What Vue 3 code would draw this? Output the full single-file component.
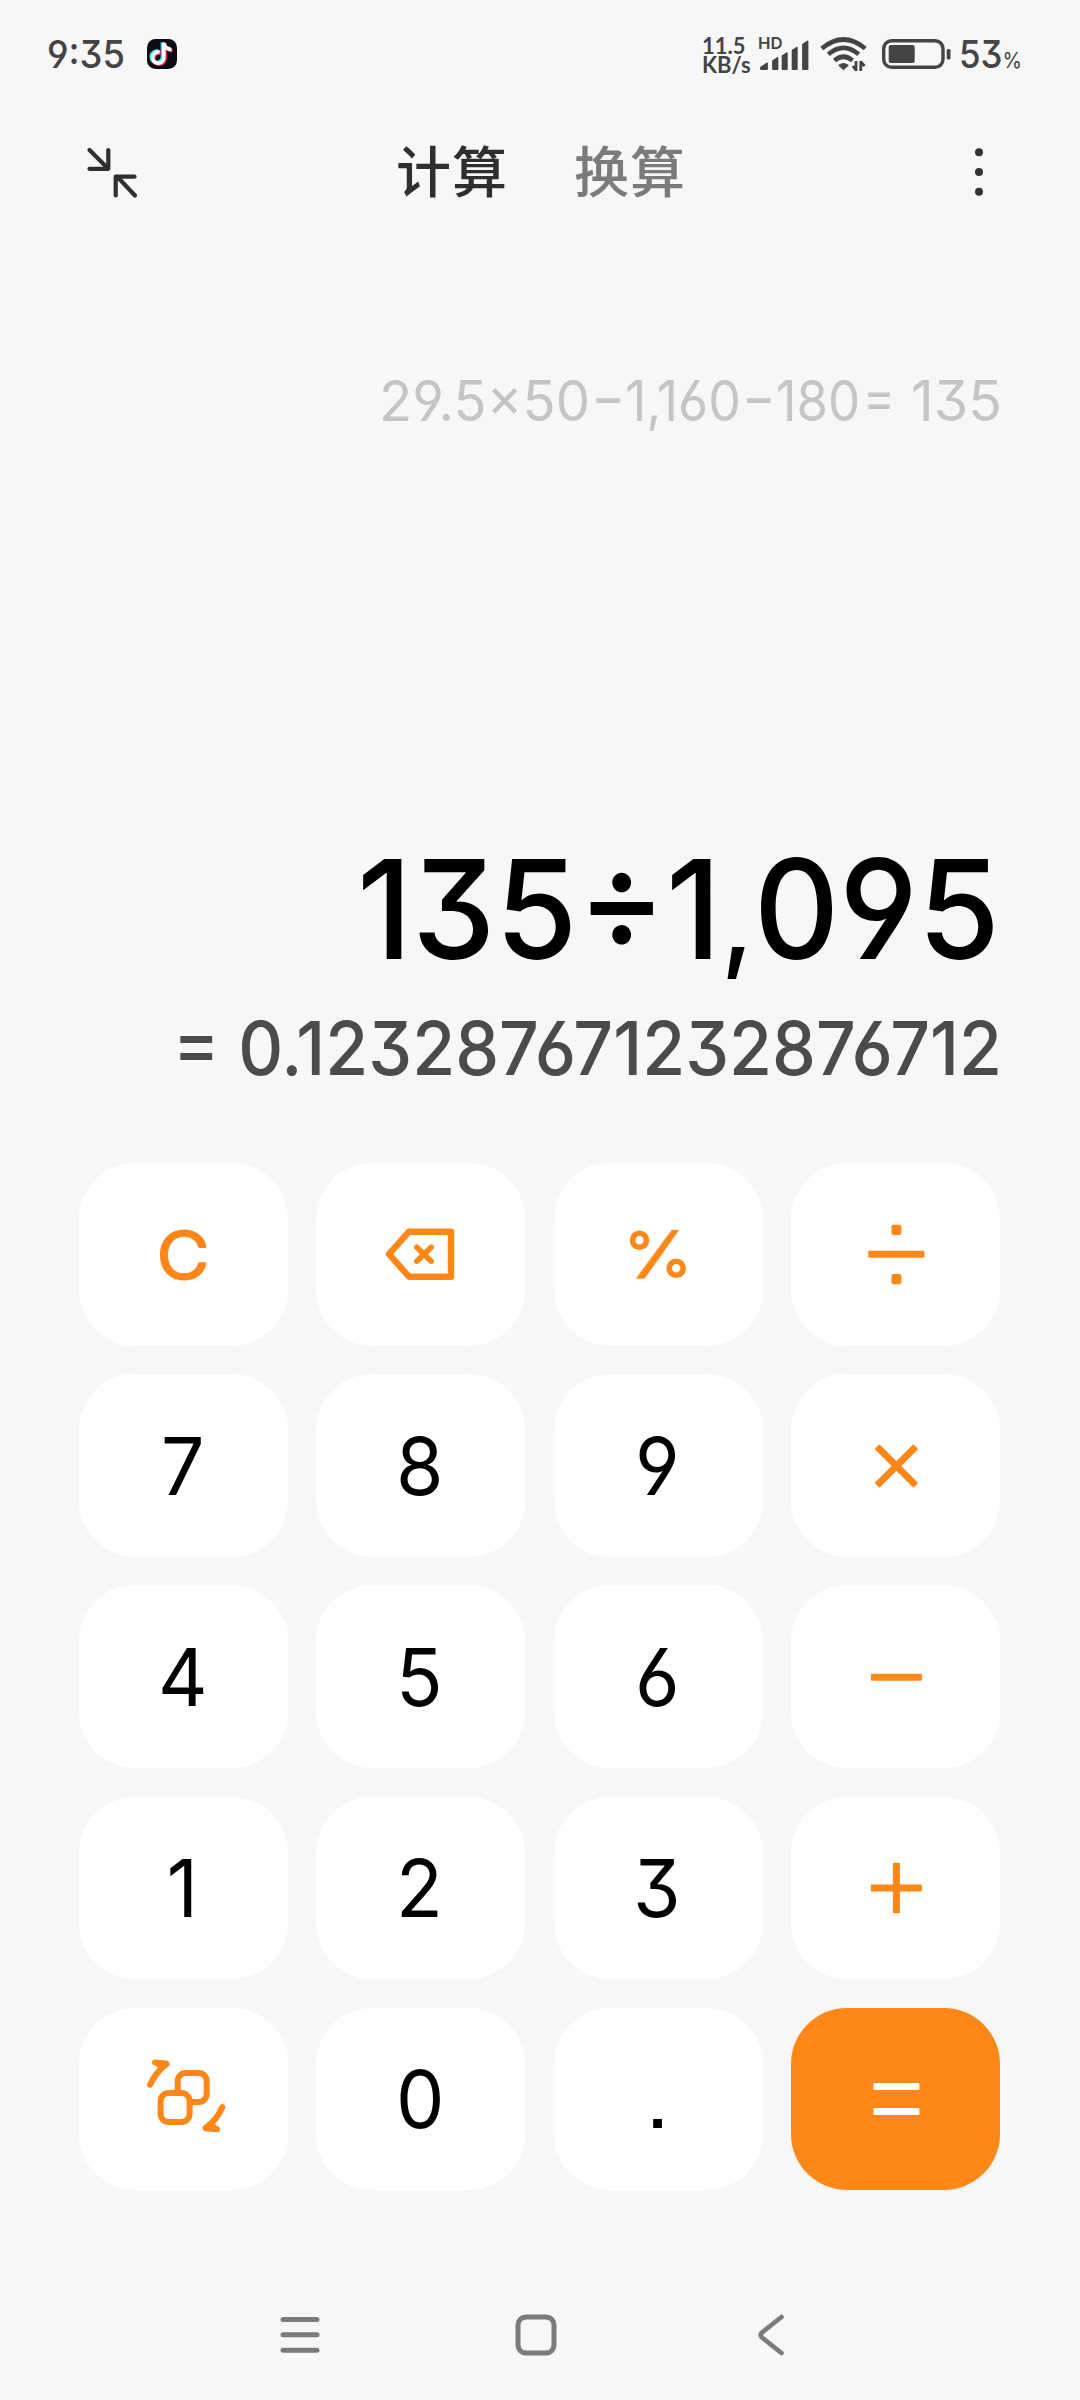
<script setup>
const keys = [
  { id: 'clear', icon: true }, { id: 'back', icon: true }, { id: 'percent', icon: true }, { id: 'divide', icon: true },
  { id: '7' }, { id: '8' }, { id: '9' }, { id: 'times', icon: true },
  { id: '4' }, { id: '5' }, { id: '6' }, { id: 'minus', icon: true },
  { id: '1' }, { id: '2' }, { id: '3' }, { id: 'plus', icon: true },
  { id: 'convert', icon: true }, { id: '0' }, { id: '.' }, { id: 'equals', icon: true },
]
</script>

<template>
  <div class="screen">
    <header class="status">
      <svg class="clock" width="78" height="40" viewBox="0 0 78 40">
        <text x="-1" y="33.800" textLength="78" lengthAdjust="spacingAndGlyphs">9:35</text>
      </svg>
      <svg class="app" width="30" height="30" viewBox="0 0 30 30">
        <rect width="30" height="30" rx="8.500" fill="#0c0a14" />
        <g fill="none" stroke-width="4">
          <path d="M12.600 13.200a5.600 5.600 0 1 0 4.200 5.400V4c.4 3.600 3.400 6.400 7.600 6.600" stroke="#35e0dc" transform="translate(-1.200 -.8)" />
          <path d="M12.600 13.200a5.600 5.600 0 1 0 4.200 5.400V4c.4 3.600 3.400 6.400 7.600 6.600" stroke="#f5365c" transform="translate(1 .8)" />
          <path d="M12.600 13.200a5.600 5.600 0 1 0 4.200 5.400V4c.4 3.600 3.400 6.400 7.600 6.600" stroke="#fff" stroke-width="3.600" />
        </g>
      </svg>
      <div class="grow"></div>
      <div class="speed">11.5<br>KB/s</div>
      <svg class="signal" width="52" height="40" viewBox="0 0 52 40">
        <text x="0" y="18" textLength="24.500" lengthAdjust="spacingAndGlyphs">HD</text>
        <path d="M3 36.500 9 32.500V38H3ZM15 30 19.500 27V38H15ZM24.600 25 28.800 22.300V38H24.600ZM34.600 19.500 38.800 16.800V38H34.600ZM45 13.500 49.500 10.500V38H45Z" fill="#444" stroke="#444" stroke-width="1.800" stroke-linejoin="round" />
      </svg>
      <svg class="wifi" width="48" height="36" viewBox="0 0 48 36">
        <g fill="none" stroke="#444" stroke-width="4.600">
          <path d="M1.800 12.500Q23.500 -5.500 45.200 12.500" />
          <path d="M8.300 18.300Q23.500 5.500 38.700 18.300" />
          <path d="M14.500 24.500Q23.500 17 32.500 24.500" />
        </g>
        <path d="M18.700 29.300Q23.500 25.800 28.300 29.300L23.500 33.800Z" fill="#444" stroke="#444" stroke-linejoin="round" />
        <path d="M36 25V35M36.400 34.500 32.800 30M40.800 35V25M40.400 25.500 44.600 30" fill="none" stroke="#444" stroke-width="2.800" />
      </svg>
      <svg class="battery" width="69" height="30" viewBox="0 0 69 30">
        <rect x="1.700" y="1.700" width="59.300" height="26.600" rx="8" fill="none" stroke="#444" stroke-width="3.400" />
        <rect x="6.700" y="6" width="26" height="18" rx="2" fill="#444" />
        <rect x="64.700" y="10" width="3.800" height="10.500" rx="1.500" fill="#444" />
      </svg>
      <svg class="charge" width="64" height="40" viewBox="0 0 64 40">
        <text class="num" x="-1" y="33.800" textLength="43.500" lengthAdjust="spacingAndGlyphs">53</text>
        <text class="pct" x="42.500" y="33.500" textLength="19.500" lengthAdjust="spacingAndGlyphs">%</text>
      </svg>
    </header>

    <nav class="tabs">
      <svg class="shrink" width="52" height="52" viewBox="0 0 52 52">
        <path d="M4.500 4 22.500 22M23.300 4V22.800H4.500M50 49.500 32 30.500M49.500 30.700H30.700V49.500" fill="none" stroke="#2f2f2f" stroke-width="4.200" stroke-linecap="round" stroke-linejoin="round" />
      </svg>
      <span class="tab on">计算</span>
      <span class="tab">换算</span>
      <svg class="more" width="10" height="50" viewBox="0 0 10 50">
        <circle cx="5" cy="5.200" r="4" /><circle cx="5" cy="25" r="4" /><circle cx="5" cy="44.700" r="4" />
      </svg>
    </nav>

    <section class="display">
      <svg class="history" width="700" height="70" viewBox="0 0 700 70">
        <text y="55.700"><tspan x="79" textLength="211" lengthAdjust="spacingAndGlyphs">29.5×50</tspan><tspan x="291" textLength="150" lengthAdjust="spacingAndGlyphs">−1,160</tspan><tspan x="442" textLength="118" lengthAdjust="spacingAndGlyphs">−180</tspan><tspan x="563" textLength="32" lengthAdjust="spacingAndGlyphs">=</tspan><tspan x="611" textLength="91" lengthAdjust="spacingAndGlyphs">135</tspan></text>
      </svg>
      <svg class="expr" width="800" height="160" viewBox="0 0 800 160">
        <text x="157" y="119" textLength="643" lengthAdjust="spacingAndGlyphs">135÷1<tspan class="comma">,</tspan>095</text>
      </svg>
      <svg class="result" width="900" height="80" viewBox="0 0 900 80">
        <text x="73" y="65" textLength="829" lengthAdjust="spacingAndGlyphs">= 0.123287671232876712</text>
      </svg>
    </section>

    <main class="pad">
      <button v-for="k in keys" :key="k.id" class="key" :class="{ accent: k.id === 'equals' }">
        <svg v-if="k.icon" width="100" height="100" viewBox="-50 -50 100 100">
          <text v-if="k.id === 'clear'" class="clear" x="-26" y="25" textLength="52" lengthAdjust="spacingAndGlyphs">C</text>
          <g v-else-if="k.id === 'back'" class="line">
            <path d="M-12-22.300H30V22.700H-12L-32 .2Z" stroke-width="6.400" />
            <path d="M-4.200-6.800 10.200 7.200M10.200-6.800-4.200 7.200" stroke-width="5.600" />
          </g>
          <g v-else-if="k.id === 'percent'" class="line">
            <circle cx="-18.500" cy="-13.800" r="7" stroke-width="5.600" />
            <circle cx="18.200" cy="14.300" r="7" stroke-width="5.600" />
            <path class="solid" d="M14-23.700H20.500L-13.500 24.200H-21.200Z" stroke-width=".8" />
          </g>
          <g v-else-if="k.id === 'divide'" class="solid">
            <rect x="-27.800" y="-3.300" width="56.200" height="7" rx="1" />
            <rect x="-4.600" y="-29.300" width="10" height="10.300" rx="2" />
            <rect x="-4.600" y="20" width="10" height="10.300" rx="2" />
          </g>
          <g v-else-if="k.id === 'times'" class="solid" transform="translate(.4 0) rotate(45)">
            <rect x="-27.500" y="-3.500" width="55" height="7" rx="1.500" />
            <rect x="-3.500" y="-27.500" width="7" height="55" rx="1.500" />
          </g>
          <rect v-else-if="k.id === 'minus'" class="solid" x="-25.100" y="-3.300" width="51" height="7" rx="1" />
          <g v-else-if="k.id === 'plus'" class="solid">
            <rect x="-25.100" y="-3.500" width="51" height="7" rx="1" />
            <rect x="-3.100" y="-25.200" width="7" height="50.500" rx="1" />
          </g>
          <g v-else-if="k.id === 'convert'" class="line" stroke-width="6">
            <rect x="-5.300" y="-26" width="29" height="29" rx="8" />
            <rect x="-22.400" y="-6" width="29" height="29" rx="8" fill="#fff" />
            <path d="M-33-14.300Q-27-27-16.500-35L-28-36.600" />
            <path d="M39.300 8Q34 21 22.500 29L34 30.300" />
            <path class="solid" d="M-28-36.600H-16.500L-22-31ZM34 30.300H22.500L29 24.500Z" stroke-width="4" />
          </g>
          <g v-else fill="#fff">
            <rect x="-22.600" y="-16" width="46" height="7" rx="1" />
            <rect x="-22.600" y="9" width="46" height="7" rx="1" />
          </g>
        </svg>
        <span v-else>{{ k.id }}</span>
      </button>
    </main>

    <footer class="system">
      <svg width="40" height="42" viewBox="0 0 40 42">
        <path d="M3 5.500H37M3 20.800H37M3 36.200H37" stroke-width="5" />
      </svg>
      <svg class="home" width="42" height="42" viewBox="0 0 42 42">
        <rect x="3" y="3" width="36" height="36" rx="8" stroke-width="5" />
      </svg>
      <svg class="prev" width="30" height="42" viewBox="0 0 30 42">
        <path d="M25.500 3 6 18.500Q3.500 21 6 23.500L25.500 39" stroke-width="4.600" />
      </svg>
    </footer>
  </div>
</template>

<style>
body { background: #f7f7f7; }
</style>

<style scoped>
.screen {
  width: 1080px;
  height: 2400px;
  display: flex;
  flex-direction: column;
  overflow: hidden;
  background: #f7f7f7;
  font-family: Inter, "Noto Sans CJK SC", sans-serif;
  font-feature-settings: "cv09", "cv03", "cv04", "calt" 0, "case";
}
svg { display: block; flex: none; overflow: visible; }
.status { height: 108px; padding: 0 56px 0 48px; box-sizing: border-box; display: flex; align-items: center; fill: #444; }
.clock { font-size: 38.5px; font-weight: 500; }
.app { margin-left: 21px; }
.grow { flex: 1; }
.speed { width: 52px; color: #444; font-family: Lato, sans-serif; font-size: 22px; line-height: 19px; font-weight: 700; white-space: nowrap; margin-top: 1px; }
.signal { margin-left: 4px; font-size: 16.5px; font-weight: 600; margin-top: -7px; }
.wifi { margin-left: 10px; }
.battery { margin-left: 14px; }
.charge { margin-left: 9px; font-weight: 500; }
.num { font-size: 38.5px; }
.pct { font-size: 22px; font-weight: 400; }
.tabs { height: 128px; display: flex; align-items: center; padding-left: 85px; }
.shrink { margin-right: 259px; }
.tab { font-family: "Noto Sans CJK SC", sans-serif; font-size: 55px; line-height: 80px; height: 80px; width: 110px; white-space: nowrap; color: #7b7b7b; letter-spacing: 1px; margin: 0 68px 8px 0; font-weight: 500; }
.tab.on { color: #2f2f2f; }
.more { margin-left: 222px; fill: #333; }
.display { height: 926px; display: flex; flex-direction: column; align-items: flex-end; padding: 129px 80px 0 0; box-sizing: border-box; }
.history { font-size: 56px; fill: #c5c5c5; font-weight: 400; }
.expr { margin-top: 405px; font-size: 138px; font-weight: 450; fill: #000; }
.comma { font-size: 112px; }
.result { margin-top: 10px; font-size: 74px; font-weight: 450; fill: #4b4b4b; }
.pad { margin: 1px 80px 0 79px; height: 1027.5px; display: grid; grid-template: repeat(5, 1fr) / repeat(4, 1fr); gap: 28.5px; }
.key { border: 0; padding: 0; border-radius: 56px; background: #fff; display: flex; align-items: center; justify-content: center; color: #000; font: inherit; font-size: 80px; line-height: 100px; font-weight: 400; font-feature-settings: "cv09", "cv03", "cv04", "ss07"; }
.key span { transform: scaleX(.96); margin-right: 2px; }
.accent { background: #ff8718; }
.solid { fill: #ff8718; }
.line { fill: none; stroke: #ff8718; stroke-linecap: round; stroke-linejoin: round; }
.clear { font-size: 66px; font-weight: 300; fill: #ff8718; stroke: #ff8718; stroke-width: 3px; stroke-linejoin: round; }
.system { margin-top: 123.5px; padding-left: 280px; display: flex; fill: none; stroke: #7b7b7b; stroke-linecap: round; stroke-linejoin: round; }
.home { margin-left: 195px; }
.prev { margin-left: 199px; }
</style>
